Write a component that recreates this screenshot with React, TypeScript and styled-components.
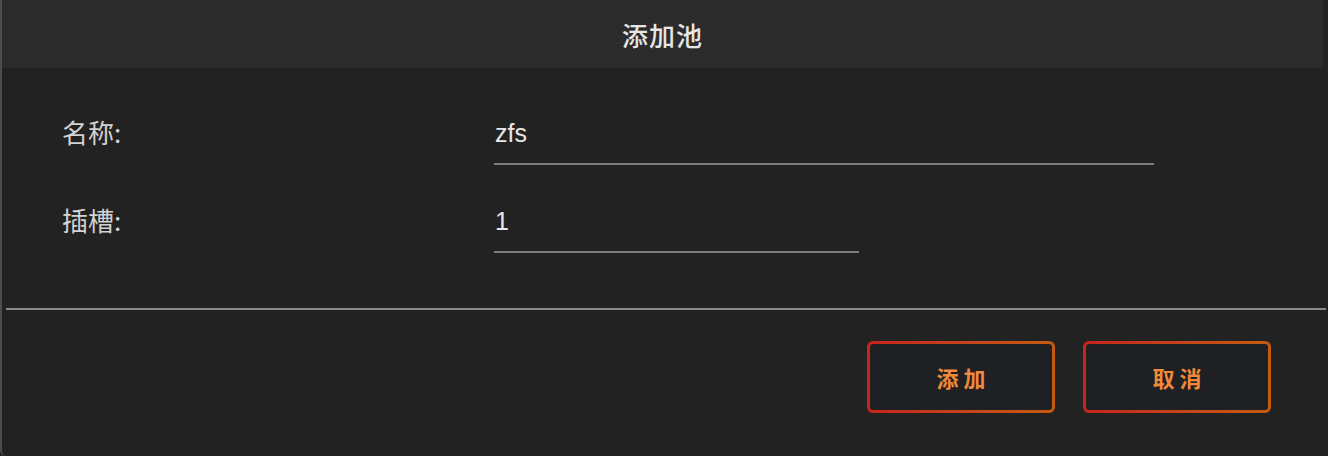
import React from "react";
import styled, { createGlobalStyle } from "styled-components";

const Global = createGlobalStyle`
  html, body {
    margin: 0;
    padding: 0;
    background: #222222;
  }
  body {
    font-family: "Noto Sans CJK SC", "Noto Sans", "Liberation Sans", sans-serif;
  }
`;

const Dialog = styled.div`
  box-sizing: border-box;
  width: 1328px;
  height: 456px;
  background: #222222;
  border-left: 2px solid #4c4c4c;
  border-bottom-left-radius: 6px;
  display: flex;
  flex-direction: column;
  overflow: hidden;
`;

const Header = styled.div`
  height: 68px;
  margin-right: 5px;
  background: #2b2b2b;
  border-bottom-right-radius: 4px;
  display: flex;
  align-items: center;
  justify-content: center;
  color: #e6e6e6;
  font-size: 26px;
  font-weight: 500;
  letter-spacing: 1px;
`;

const Form = styled.div`
  display: flex;
  flex-direction: column;
  gap: 40px;
  padding: 49px 0 0 60px;
`;

const Row = styled.div`
  display: grid;
  grid-template-columns: 432px auto;
  align-items: start;
`;

const Label = styled.div`
  color: #d2d2d2;
  font-size: 26px;
  line-height: 30px;
`;

const Field = styled.div<{ $width: number }>`
  box-sizing: border-box;
  width: ${(p) => p.$width}px;
  height: 48px;
  border-bottom: 2px solid #7c7c7c;
  color: #e8e8e8;
  font-family: "Liberation Sans", "Noto Sans", sans-serif;
  font-size: 25px;
  line-height: 32px;
  padding-left: 1px;
`;

const Separator = styled.div`
  height: 2px;
  margin: 55px 2px 0 4px;
  background: #8a8a8a;
`;

const Footer = styled.div`
  display: flex;
  justify-content: flex-end;
  gap: 28px;
  padding: 31px 57px 0 0;
`;

const Button = styled.button`
  box-sizing: border-box;
  width: 188px;
  height: 72px;
  border: 3px solid transparent;
  border-radius: 6px;
  background:
    linear-gradient(#1f2023, #1f2023) padding-box,
    linear-gradient(90deg, #c8241c 0%, #c5461a 55%, #c45c10 100%) border-box;
  color: #f08a3a;
  font-family: "Noto Sans CJK SC", "Noto Sans", sans-serif;
  font-size: 22px;
  font-weight: 700;
  letter-spacing: 5px;
  padding: 0 0 0 5px;
  cursor: pointer;
`;

export default function App() {
  return (
    <>
      <Global />
      <Dialog>
        <Header>添加池</Header>
        <Form>
          <Row>
            <Label>名称:</Label>
            <Field $width={660}>zfs</Field>
          </Row>
          <Row>
            <Label>插槽:</Label>
            <Field $width={365}>1</Field>
          </Row>
        </Form>
        <Separator />
        <Footer>
          <Button>添加</Button>
          <Button>取消</Button>
        </Footer>
      </Dialog>
    </>
  );
}
